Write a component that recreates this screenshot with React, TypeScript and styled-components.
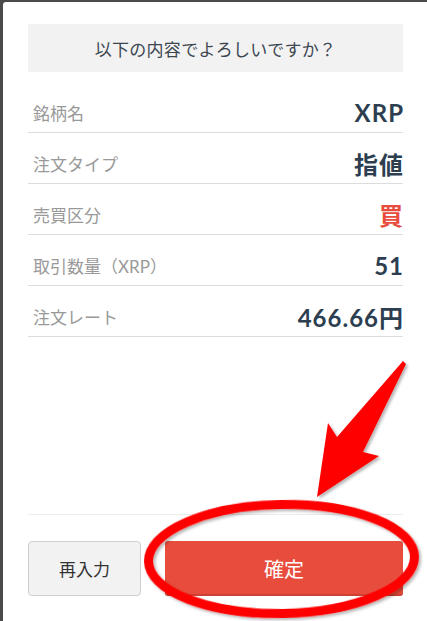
import React from 'react';
import styled, { createGlobalStyle } from 'styled-components';

const GlobalStyle = createGlobalStyle`
  html,
  body {
    margin: 0;
    background: #4a4a4a;
    font-family: Lato, 'Noto Sans CJK JP', sans-serif;
  }

  * {
    box-sizing: border-box;
  }
`;

const Page = styled.div`
  position: relative;
  height: 621px;
  padding: 2px 0 0 3px;
  overflow: hidden;
`;

const Modal = styled.div`
  display: flex;
  flex-direction: column;
  height: 619px;
  padding: 22px 24px 25px 25px;
  background: #fff;
  border-top-left-radius: 3px;
`;

const Question = styled.div`
  display: flex;
  align-items: center;
  justify-content: center;
  height: 48px;
  background: #f2f2f2;
  color: #3c4651;
  font-size: 17px;
  letter-spacing: 0.3px;
`;

const Details = styled.dl`
  flex: 1;
  margin: 10px 0 0;
`;

const Row = styled.div`
  display: flex;
  align-items: center;
  justify-content: space-between;
  height: 51px;
  padding: 11px 0 0 5px;
  border-bottom: 1px solid #dcdcdc;
`;

const Label = styled.dt`
  color: #999;
  font-size: 17px;
`;

const Value = styled.dd<{ $accent?: boolean }>`
  margin: 0 -1px 0 0;
  color: ${({ $accent }) => ($accent ? '#e74c3c' : '#2c3e50')};
  font-size: 24px;
  font-weight: 700;
  letter-spacing: 1px;
`;

const Footer = styled.div`
  display: flex;
  gap: 24px;
  padding-top: 26px;
  border-top: 1px solid #ececec;
`;

const CancelButton = styled.button`
  width: 113px;
  height: 55px;
  background: #f2f2f2;
  border: 1px solid #cfcfcf;
  border-radius: 4px;
  color: #333;
  font-family: inherit;
  font-size: 17px;
`;

const ConfirmButton = styled.button`
  flex: 1;
  height: 55px;
  background: #e74c3c;
  border: none;
  border-radius: 3px;
  box-shadow: inset 0 -2px 0 rgba(0, 0, 0, 0.12);
  color: #fff;
  font-family: inherit;
  font-size: 20px;
`;

const Annotation = styled.svg`
  position: absolute;
  top: 0;
  left: 0;
  pointer-events: none;
`;

const rows = [
  { label: '銘柄名', value: 'XRP' },
  { label: '注文タイプ', value: '指値' },
  { label: '売買区分', value: '買', accent: true },
  { label: '取引数量（XRP）', value: '51' },
  { label: '注文レート', value: '466.66円' },
];

export default function App() {
  return (
    <Page>
      <GlobalStyle />
      <Modal>
        <Question>以下の内容でよろしいですか？</Question>
        <Details>
          {rows.map((row) => (
            <Row key={row.label}>
              <Label>{row.label}</Label>
              <Value $accent={row.accent}>{row.value}</Value>
            </Row>
          ))}
        </Details>
        <Footer>
          <CancelButton>再入力</CancelButton>
          <ConfirmButton>確定</ConfirmButton>
        </Footer>
      </Modal>

      {/* red markup drawn over the screenshot */}
      <Annotation width="427" height="621" viewBox="0 0 427 621">
        <defs>
          <filter id="shade" x="-10%" y="-10%" width="130%" height="130%">
            <feDropShadow dx="2" dy="2" stdDeviation="1.5" floodOpacity="0.3" />
          </filter>
        </defs>
        <g filter="url(#shade)" fill="#ff0000">
          <polygon points="403,361 337,437 328,423 317,497 379,456 363,452 406,364" />
        </g>
        <ellipse
          cx="281.5"
          cy="559"
          rx="133"
          ry="54.5"
          fill="none"
          stroke="#ff0000"
          strokeWidth="9"
          transform="rotate(-1 281.5 559)"
          filter="url(#shade)"
        />
      </Annotation>
    </Page>
  );
}
